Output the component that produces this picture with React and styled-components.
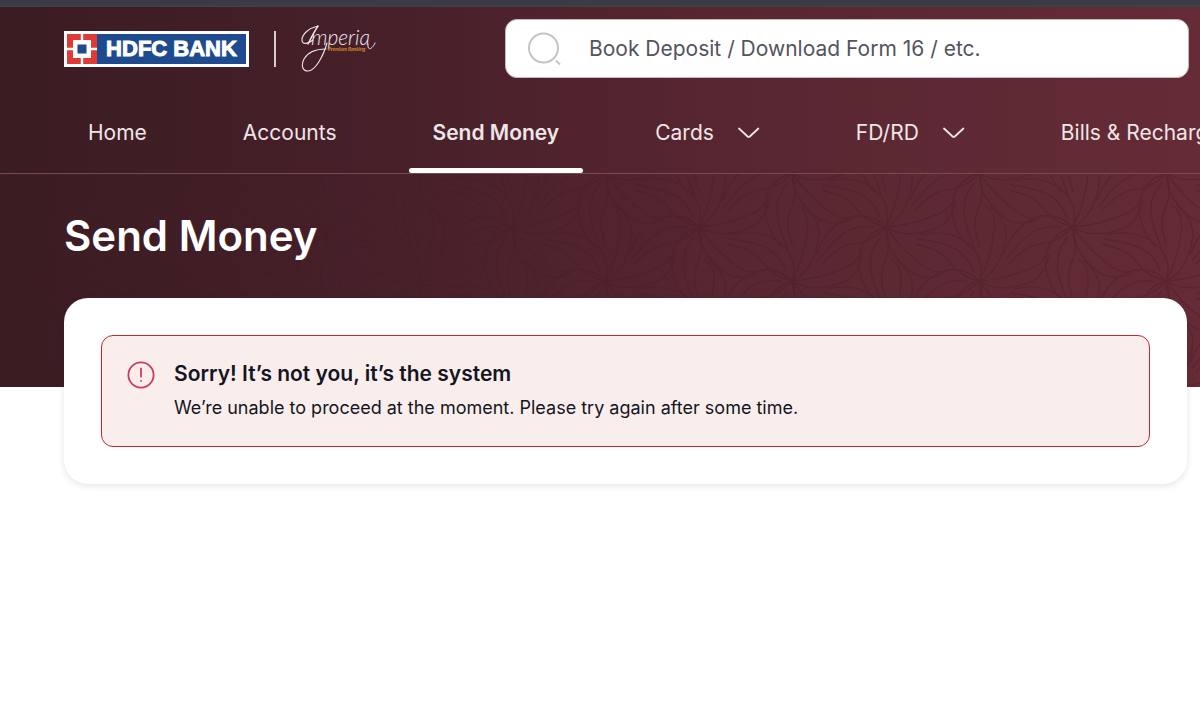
import React from "react";
import styled, { createGlobalStyle } from "styled-components";

const GlobalStyle = createGlobalStyle`
  *, *::before, *::after { box-sizing: border-box; }
  body {
    margin: 0;
    background: #fff;
    color: #14151f;
    font-family: Inter, "Liberation Sans", sans-serif;
    overflow-x: hidden;
  }
`;

const Page = styled.div`
  min-height: 100vh;
`;

const TopStrip = styled.div`
  height: 7px;
  background: linear-gradient(#3b3b46 60%, #3e4444);
`;

const Banner = styled.div`
  background: linear-gradient(90deg, #3b1c22 0%, #47202a 33%, #55252f 55%, #602a35 85%, #652b36 100%);
`;

const TopBar = styled.header`
  display: flex;
  align-items: center;
  padding: 12px 11px 12px 64px;
`;

const Brand = styled.a`
  display: flex;
  align-items: center;
  gap: 25px;
  flex: 0 0 441px;
  color: #fff;
  text-decoration: none;
`;

const BankLogo = styled.span`
  display: flex;
  align-items: center;
  height: 36px;
  width: 185px;
  padding: 3px;
  background: #fff;
`;

const BankName = styled.span`
  flex: 1;
  height: 30px;
  line-height: 30px;
  background: #1d4b8d;
  text-align: center;
  font-family: "Liberation Sans", Arial, sans-serif;
  font-size: 22px;
  font-weight: 700;
  -webkit-text-stroke: 1px #fff;
  white-space: nowrap;
`;

const Divider = styled.span`
  width: 2px;
  height: 36px;
  background: #d9cdd0;
`;

const Search = styled.label`
  display: flex;
  align-items: center;
  flex: 1;
  min-width: 0;
  height: 59px;
  padding: 0 22px;
  gap: 26px;
  border: 1px solid #c9b9bd;
  border-radius: 12px;
  background: #fff;
`;

const SearchInput = styled.input`
  flex: 1;
  min-width: 0;
  border: 0;
  padding: 0;
  outline: 0;
  background: transparent;
  font: 400 21px/30px Inter, "Liberation Sans", sans-serif;
  color: #53545f;
  &::placeholder { color: #53545f; opacity: 1; }
`;

const Nav = styled.nav`
  display: flex;
  gap: 48px;
  height: 84px;
  padding-left: 64px;
  overflow: hidden;
  border-bottom: 1px solid #7a4a53;
`;

const NavItem = styled.a`
  display: flex;
  align-items: center;
  flex: none;
  gap: 24px;
  padding: 2px 24px 0;
  font-size: 21px;
  line-height: 28px;
  font-weight: ${(p) => (p.$active ? 600 : 400)};
  color: #f0e6e8;
  text-decoration: none;
  white-space: nowrap;
  position: relative;

  &::after {
    content: "";
    display: ${(p) => (p.$active ? "block" : "none")};
    position: absolute;
    inset: auto 0 0;
    height: 5px;
    border-radius: 3px;
    background: #fff;
  }
`;

const Hero = styled.section`
  position: relative;
  padding: 34px 64px 123px;
`;

const Pattern = styled.svg`
  position: absolute;
  inset: 0;
  width: 100%;
  height: 100%;
`;

const Title = styled.h1`
  position: relative;
  margin: 0;
  font-size: 42px;
  line-height: 56px;
  font-weight: 600;
  color: #fff;
`;

const Card = styled.main`
  position: relative;
  margin: -89px 13px 0 64px;
  padding: 37px;
  border-radius: 24px;
  background: #fff;
  box-shadow: 0 2px 6px rgba(40, 40, 70, 0.12);
`;

const Alert = styled.div`
  display: flex;
  gap: 19px;
  padding: 22px 25px 24px;
  border: 1px solid #c4282e;
  border-radius: 12px;
  background: #faeeed;
`;

const AlertIcon = styled.svg`
  flex: none;
  width: 28px;
  height: 28px;
  margin-top: 3px;
`;

const AlertTitle = styled.h2`
  margin: 0 0 4px;
  font-size: 21px;
  line-height: 32px;
  font-weight: 600;
`;

const AlertText = styled.p`
  margin: 0;
  font-size: 18px;
  line-height: 28px;
`;

const items = [
  { label: "Home" },
  { label: "Accounts" },
  { label: "Send Money", active: true },
  { label: "Cards", menu: true },
  { label: "FD/RD", menu: true },
  { label: "Bills & Recharges", menu: true },
];

function Emblem() {
  return (
    <svg width="30" height="30" viewBox="0 0 30 30" aria-hidden="true">
      <rect width="30" height="30" fill="#e03a36" />
      <path d="M15 0v30M0 15h30" stroke="#fff" strokeWidth="2.4" />
      <rect x="6" y="6" width="18" height="18" fill="#fff" />
      <rect x="10.5" y="10.5" width="9" height="9" fill="#1d4b8d" />
    </svg>
  );
}

function Imperia() {
  return (
    <svg width="76" height="52" viewBox="2 0 76 52" role="img" aria-label="Imperia Premium Banking">
      <g fill="none" stroke="#f2e6ea" strokeLinecap="round">
        <path d="M19 3C10 5 3 11 3 17c0 5 6 4 11 0" strokeWidth="1.1" />
        <path d="M19 3C15 9 12 15 9 21" strokeWidth="1.4" />
        <path d="M28 20C24 34 16 48 9 48 3 48 2 42 5 36 9 29 18 26 27 26" strokeWidth="1.1" />
        <path d="M69 21c-1 7 4 6 7-1" strokeWidth="1" />
      </g>
      <text x="12" y="22" fill="#f2e6ea" fontFamily="Lato, sans-serif" fontStyle="italic" fontWeight="300" fontSize="21">mperia</text>
      <text x="29" y="28" fill="#d98a2b" fontFamily="Lato, sans-serif" fontStyle="italic" fontWeight="700" fontSize="5">Premium Banking</text>
    </svg>
  );
}

function Chevron() {
  return (
    <svg width="22" height="14" viewBox="0 0 22 14" fill="none" stroke="#f0e6e8" strokeWidth="1.8" strokeLinecap="round" aria-hidden="true">
      <path d="M1 2.5l8.6 8c.6.6 1.6.6 2.2 0l8.6-8" />
    </svg>
  );
}

function Leaf({ x, y, turn }) {
  return (
    <g transform={`translate(${x} ${y}) rotate(${turn})`}>
      <path d="M0 0C-22 6-29 24-27 42-25 56-18 66-11 74M-5 10C-14 20-17 32-15 44-13 58-8 66-5 76M0 0C5 18 2 28-3 40-7 54-2 64 0 74M5 32C12 36 16 44 15 56 13 76 8 92 0 108M11 34C22 42 28 54 26 66 23 84 16 100 0 108" />
    </g>
  );
}

function LeafPattern() {
  const hubs = [[0, 0], [187, 0], [93.5, 54], [0, 108], [187, 108], [93.5, -54], [93.5, 162], [280.5, -54], [280.5, 54], [280.5, 162], [-93.5, 54]];
  const edges = hubs.flatMap(([x, y]) => [0, 60, 120].map((turn) => ({ x, y, turn })));
  return (
    <Pattern aria-hidden="true">
      <defs>
        <pattern id="leaves" x="-49" y="53" width="187" height="108" patternUnits="userSpaceOnUse">
          <g fill="none" stroke="#431820" strokeWidth="1.4">
            {edges.map((e) => (
              <Leaf key={`${e.x},${e.y},${e.turn}`} {...e} />
            ))}
          </g>
        </pattern>
        <linearGradient id="fade">
          <stop offset="0" stopColor="#fff" stopOpacity="0.05" />
          <stop offset="0.35" stopColor="#fff" stopOpacity="0.2" />
          <stop offset="0.65" stopColor="#fff" stopOpacity="0.3" />
          <stop offset="1" stopColor="#fff" stopOpacity="0.3" />
        </linearGradient>
        <mask id="leafMask">
          <rect width="100%" height="100%" fill="url(#fade)" />
        </mask>
      </defs>
      <rect width="100%" height="100%" fill="url(#leaves)" mask="url(#leafMask)" />
    </Pattern>
  );
}

export default function App() {
  return (
    <Page>
      <GlobalStyle />
      <TopStrip />
      <Banner>
        <TopBar>
          <Brand href="#home">
            <BankLogo>
              <Emblem />
              <BankName>HDFC BANK</BankName>
            </BankLogo>
            <Divider />
            <Imperia />
          </Brand>
          <Search>
            <svg width="35" height="36" viewBox="0 0 35 36" fill="none" stroke="#c4c4c6" strokeWidth="2" aria-hidden="true">
              <circle cx="15.5" cy="17" r="14.5" />
              <path d="M28 29.5l4 4" />
            </svg>
            <SearchInput type="search" aria-label="Search" placeholder="Book Deposit / Download Form 16 / etc." />
          </Search>
        </TopBar>
        <Nav>
          {items.map((it) => (
            <NavItem key={it.label} href="#" $active={it.active} aria-current={it.active ? "page" : undefined}>
              {it.label}
              {it.menu && <Chevron />}
            </NavItem>
          ))}
        </Nav>
        <Hero>
          <LeafPattern />
          <Title>Send Money</Title>
        </Hero>
      </Banner>
      <Card>
        <Alert role="alert">
          <AlertIcon viewBox="0 0 28 28" fill="none" stroke="#cf3a5e" strokeWidth="1.8" strokeLinecap="round" aria-hidden="true">
            <circle cx="14" cy="14" r="12.6" />
            <path d="M14 7.5v8M14 19.8v.2" />
          </AlertIcon>
          <div>
            <AlertTitle>Sorry! It’s not you, it’s the system</AlertTitle>
            <AlertText>We’re unable to proceed at the moment. Please try again after some time.</AlertText>
          </div>
        </Alert>
      </Card>
    </Page>
  );
}
